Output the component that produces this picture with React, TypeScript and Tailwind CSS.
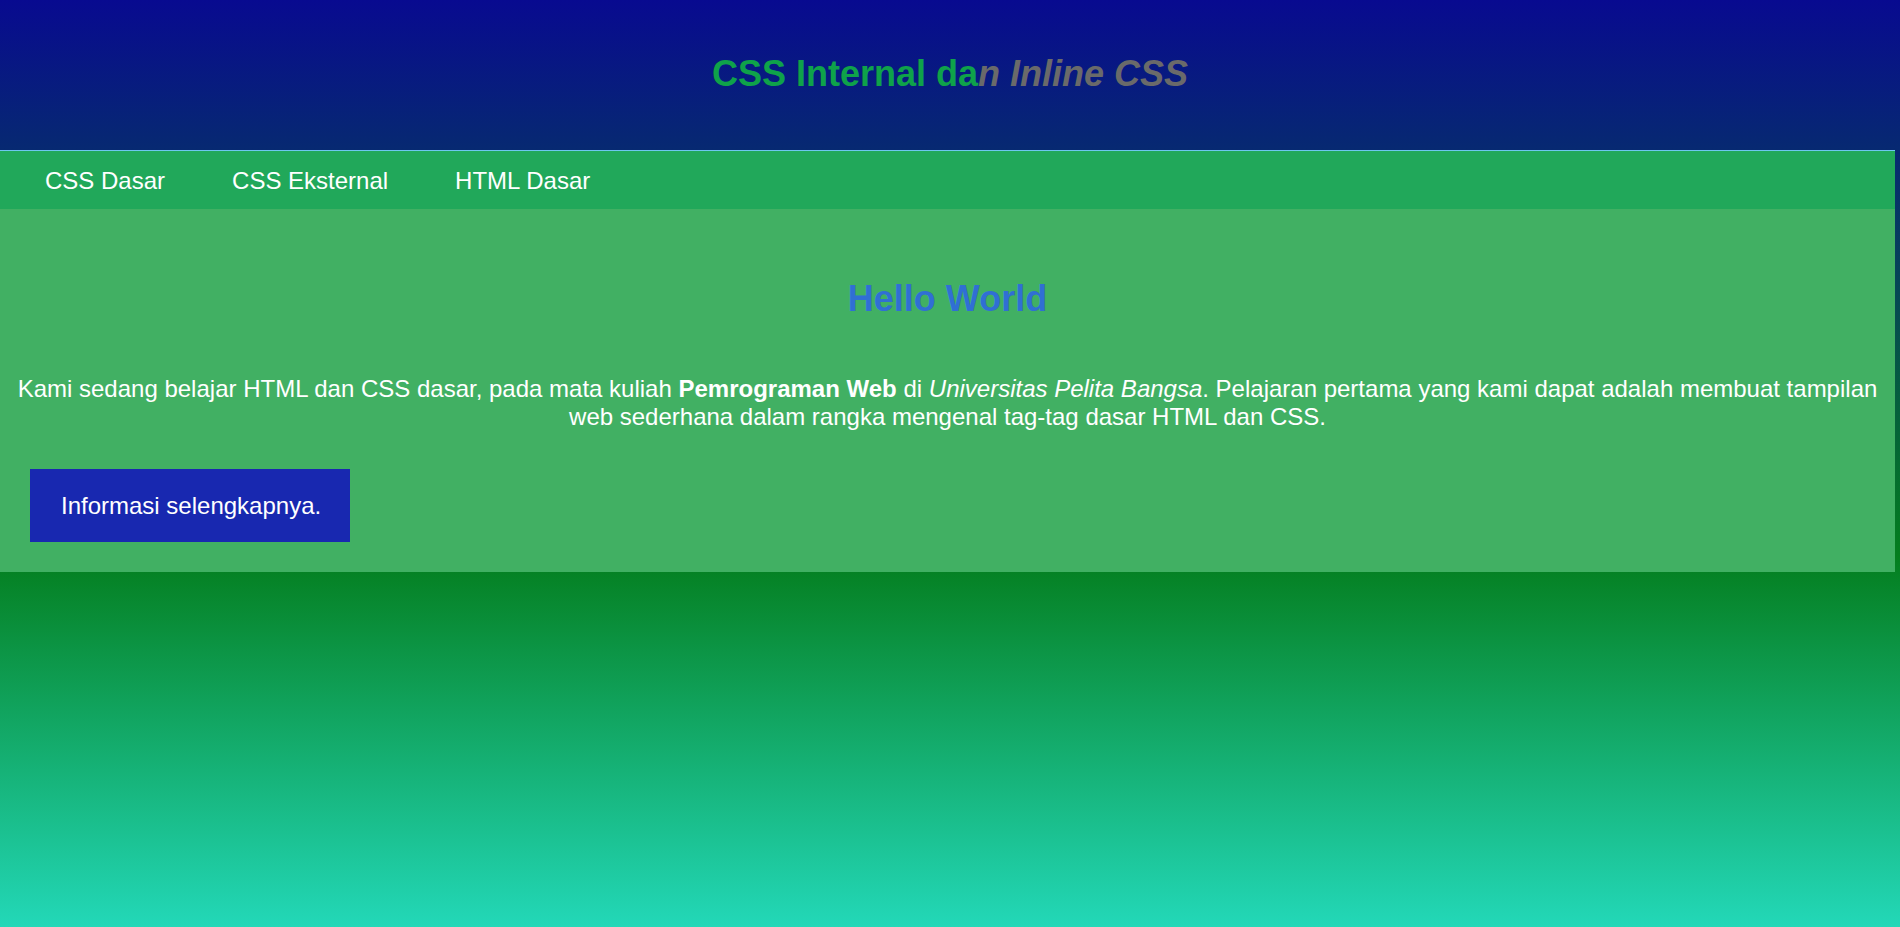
export default function App() {
  return (
    <div
      className="min-h-screen bg-[linear-gradient(to_bottom,#080a90_0%,#047e1e_60%,#23d8b8_100%)] text-white"
      style={{ fontFamily: '"Liberation Sans", Arial, sans-serif' }}
    >
      <header className="flex h-[150px] items-center justify-center pb-[2px]">
        <h1 className="text-[36px] font-bold leading-[42px] text-[#0fa24a]">
          CSS Internal da
          <i className="text-[#6a6a6a]">n Inline CSS</i>
        </h1>
      </header>

      <div className="mr-[5px]">
        <nav className="flex gap-[67px] border-t border-[#6ec6f0] bg-[#21a85a] pb-[14px] pl-[45px] pt-[16px] text-[24px] leading-[28px]">
          <a href="#">CSS Dasar</a>
          <a href="#">CSS Eksternal</a>
          <a href="#">HTML Dasar</a>
        </nav>

        <section className="bg-[#41b063] px-[12px] pb-[30px] pt-[69px]">
          <h2 className="text-center text-[36px] font-bold leading-[42px] text-[#306fd4]">
            Hello World
          </h2>
          <p className="mt-[55px] text-center text-[24px] leading-[27.5px]">
            Kami sedang belajar HTML dan CSS dasar, pada mata kuliah{" "}
            <b>Pemrograman Web</b> di <i>Universitas Pelita Bangsa</i>.
            Pelajaran pertama yang kami dapat adalah membuat tampilan web
            sederhana dalam rangka mengenal tag-tag dasar HTML dan CSS.
          </p>
          <button className="ml-[18px] mt-[39px] flex h-[73px] w-[320px] items-center bg-[#1828b0] pl-[31px] text-[24px] leading-[28px]">
            Informasi selengkapnya.
          </button>
        </section>
      </div>
    </div>
  );
}
